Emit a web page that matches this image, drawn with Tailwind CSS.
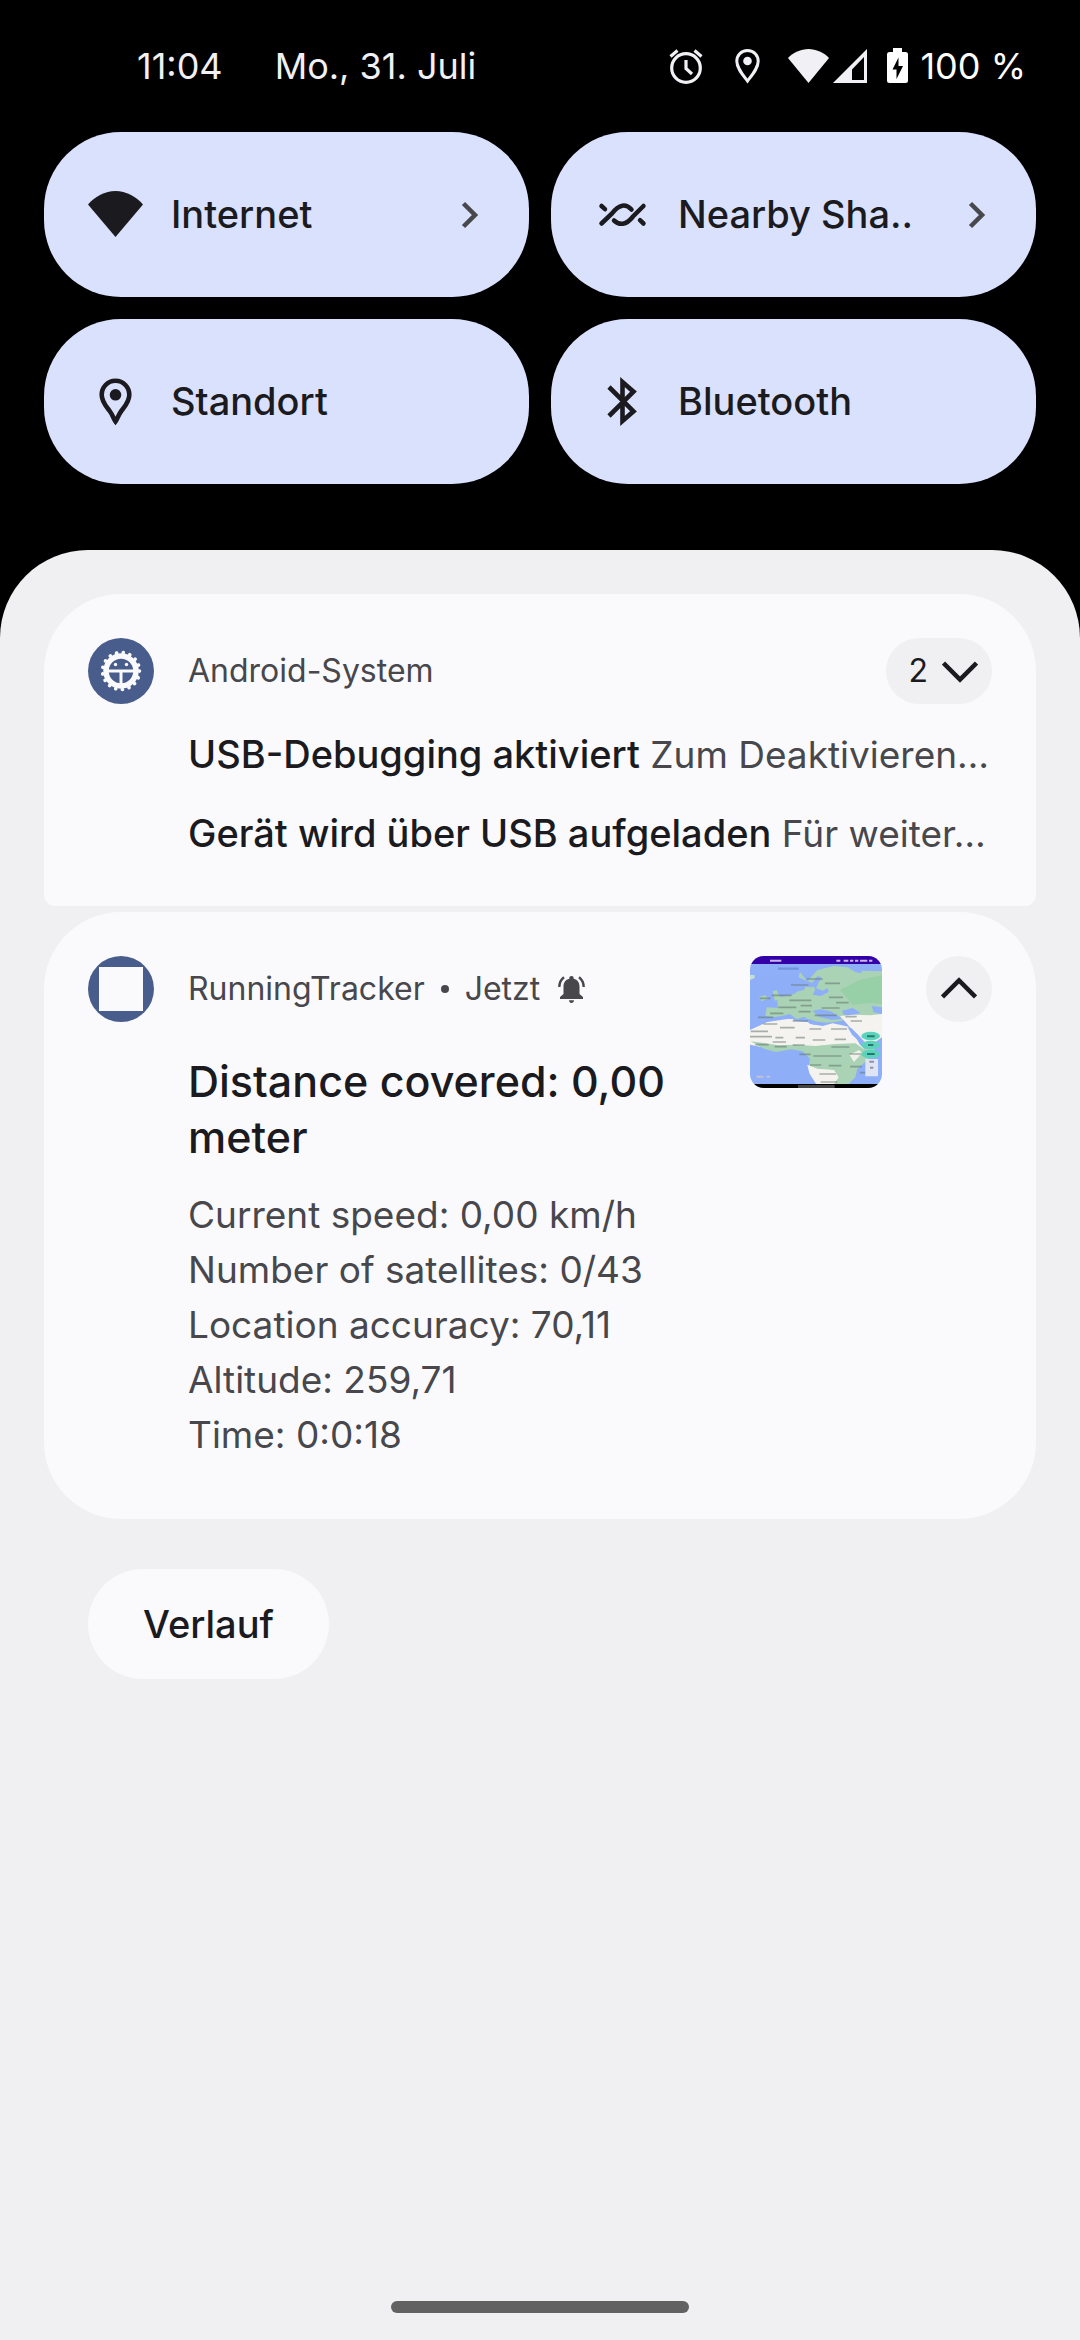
<!DOCTYPE html>
<html lang="de">
<head>
<meta charset="utf-8">
<meta name="viewport" content="width=device-width, initial-scale=1">
<title>Benachrichtigungen</title>
<script src="https://cdn.jsdelivr.net/npm/@tailwindcss/browser@4"></script>
</head>
<body class="bg-black font-['Inter',sans-serif] text-[#1b1b1f]">
<div class="flex min-h-screen flex-col">

  <!-- Status bar -->
  <header class="flex h-[132px] items-center justify-between pr-[54px] pl-[137px] text-4xl text-[#f1f0f4]">
    <div class="flex items-center gap-[52px]">
      <time>11:04</time>
      <span>Mo., 31. Juli</span>
    </div>
    <div class="flex items-center">
      <svg class="mr-[30px] h-9 w-9" viewBox="0 0 36 36" fill="none" stroke="currentColor" stroke-width="3.200"><circle cx="18" cy="20" r="14.300"/><path d="M18 12v8.500l6 5.500M2.500 8.500l7-6M33.500 8.500l-7-6"/></svg>
      <svg class="mr-[27px] h-9 w-[27px]" viewBox="0 0 27 36"><path d="M13.500 2.500C7 2.500 2.800 7.500 2.800 13.300c0 6.700 5.700 13.200 10.700 19.700 5-6.500 10.700-13 10.700-19.700 0-5.800-4.200-10.800-10.700-10.800z" fill="none" stroke="currentColor" stroke-width="3"/><circle cx="13.500" cy="13" r="4.300" fill="currentColor"/></svg>
      <svg class="mr-1 h-[34px] w-[41px]" viewBox="0 0 41 34"><path d="M0 9C5 3.500 13 0 20.500 0S36 3.500 41 9L20.500 34z" fill="currentColor"/></svg>
      <svg class="mr-5 h-[34px] w-[34px]" viewBox="0 0 34 34"><path fill-rule="evenodd" d="M34 0v34H0zM31 8L19 20.500V31h12z" fill="currentColor"/></svg>
      <svg class="mr-3 h-9 w-[21px] text-white" viewBox="0 0 21 36"><path fill-rule="evenodd" d="M6 0h9v4h3.500A2.500 2.500 0 0 1 21 6.500v26a2.500 2.500 0 0 1-2.500 2.500h-16A2.500 2.500 0 0 1 0 32.500v-26A2.500 2.500 0 0 1 2.500 4H6zM11.500 9.500L5.500 21.500h4V31l6.500-13h-4.500z" fill="currentColor"/></svg>
      <span class="text-white">100 %</span>
    </div>
  </header>

  <!-- Quick settings -->
  <section class="grid grid-cols-2 gap-[22px] px-11 pb-[66px] text-[38px] font-medium">
    <button class="flex h-[165px] items-center rounded-[77px] bg-[#dae1fd] pr-[50px] pl-11 text-left">
      <svg class="mr-7 h-[55px] w-[55px]" viewBox="0 0 55 55"><path d="M0 17.500C7 9.500 17 4 27.500 4S48 9.500 55 17.500L27.500 50z" fill="currentColor"/></svg>
      <span class="flex-1">Internet</span>
      <svg class="h-7 w-[18px] text-[#47474c]" viewBox="0 0 18 28" fill="none" stroke="currentColor" stroke-width="4.500"><path d="M2.500 2.500L14 14 2.500 25.500"/></svg>
    </button>
    <button class="flex h-[165px] items-center rounded-[77px] bg-[#dae1fd] pr-[50px] pl-11 text-left">
      <svg class="mr-7 h-[55px] w-[55px]" viewBox="0 0 55 55" fill="none" stroke="currentColor" stroke-width="4.500" stroke-linecap="round"><path d="M6.500 36.500L17 26.500C24 17 31 16.500 36.500 22.500M48.500 19L38 29.500C31 38.500 24.500 38.500 19 33.500"/><path d="M6.500 19l3.500 3.200M48.500 36.500l-3.500-3.300"/></svg>
      <span class="flex-1 whitespace-nowrap">Nearby Sha..</span>
      <svg class="h-7 w-[18px] text-[#47474c]" viewBox="0 0 18 28" fill="none" stroke="currentColor" stroke-width="4.500"><path d="M2.500 2.500L14 14 2.500 25.500"/></svg>
    </button>
    <button class="flex h-[165px] items-center rounded-[77px] bg-[#dae1fd] pr-[50px] pl-11 text-left">
      <svg class="mr-7 h-[55px] w-[55px]" viewBox="0 0 55 55"><path d="M27.500 6.800c-8 0-13.800 6.500-13.800 14 0 7.200 4.300 11.200 8 16.200 2.700 3.500 4.200 8.500 5.800 10.500 1.600-2 3.100-7 5.800-10.500 3.700-5 8-9 8-16.200 0-7.500-5.800-14-13.800-14z" fill="none" stroke="currentColor" stroke-width="4.600"/><circle cx="27.500" cy="20.800" r="5.800" fill="currentColor"/></svg>
      <span class="flex-1">Standort</span>
    </button>
    <button class="flex h-[165px] items-center rounded-[77px] bg-[#dae1fd] pr-[50px] pl-11 text-left">
      <svg class="mr-7 h-[55px] w-[55px]" viewBox="0 0 55 55" fill="none" stroke="currentColor" stroke-width="4.600"><path d="M14 13L38.500 37.300 27.500 47V8l11 9.700L14 42"/></svg>
      <span class="flex-1">Bluetooth</span>
    </button>
  </section>

  <!-- Notification shade -->
  <main class="flex flex-1 flex-col rounded-t-[88px] bg-[#f0f0f3] px-11 pt-11">
    <article class="flex gap-[34px] rounded-t-[77px] rounded-b-[11px] bg-[#fafafd] px-11 pt-11 pb-[33px]">
      <svg class="h-[66px] w-[66px] shrink-0" viewBox="0 0 66 66">
        <circle cx="33" cy="33" r="33" fill="#495d8c"/>
        <circle cx="33" cy="33" r="18.500" fill="none" stroke="#fafafd" stroke-width="3.600" stroke-linecap="round" stroke-dasharray="0.100 6.738"/>
        <circle cx="33" cy="33" r="15" fill="none" stroke="#fafafd" stroke-width="5.500"/>
        <path d="M20 33h26M33 33v13" stroke="#fafafd" stroke-width="3" fill="none"/>
        <circle cx="27.500" cy="26.500" r="1.700" fill="#fafafd"/><circle cx="38.500" cy="26.500" r="1.700" fill="#fafafd"/>
      </svg>
      <div class="min-w-0 flex-1">
        <div class="flex h-[66px] items-center justify-between">
          <h2 class="text-[32px] text-[#47474c]">Android-System</h2>
          <button class="flex h-[66px] items-center gap-3.5 rounded-full bg-[#f0f0f3] pr-3.5 pl-[22px] text-[32px]" aria-label="2 Benachrichtigungen maximieren">2
            <svg class="h-6 w-9" viewBox="0 0 36 24" fill="none" stroke="currentColor" stroke-width="4.500"><path d="M1.500 4L18 20.500 34.500 4"/></svg>
          </button>
        </div>
        <ul class="pt-[11px] text-[37px] leading-[79px] whitespace-nowrap text-[#47474c]">
          <li><span class="text-[38px] font-medium text-[#1b1b1f]">USB-Debugging aktiviert</span> Zum Deaktivieren…</li>
          <li><span class="text-[38px] font-medium text-[#1b1b1f]">Gerät wird über USB aufgeladen</span> Für weiter…</li>
        </ul>
      </div>
    </article>

    <article class="mt-1.5 flex items-start gap-[34px] rounded-[77px] bg-[#fafafd] px-11 pt-11 pb-[57px]">
      <svg class="h-[66px] w-[66px] shrink-0" viewBox="0 0 66 66"><circle cx="33" cy="33" r="33" fill="#495d8c"/><path d="M11 11h44v44H11z" fill="#fafafd"/></svg>
      <div class="min-w-0 flex-1">
        <div class="flex h-[66px] items-center text-[32px] text-[#47474c]">
          <h2>RunningTracker</h2>
          <span class="mx-4 h-2 w-2 rounded-full bg-[#47474c]"></span>
          <time>Jetzt</time>
          <svg class="ml-[18px] h-[27px] w-[27px]" viewBox="0 0 27 27"><path d="M13.500 0c1.300 0 2.200.9 2.200 2.200v.6c3.800.9 5.800 3.900 5.800 7.700V18l3.500 3v2H2v-2l3.500-3v-7.500c0-3.800 2-6.800 5.800-7.700v-.6C11.300.9 12.200 0 13.500 0zM11 24.300h5c0 1.600-1 2.600-2.500 2.600S11 25.900 11 24.300z" fill="currentColor"/><path d="M6 1.300C3 3.500 1.400 6.800 1.300 11M21 1.300c3 2.200 4.600 5.500 4.700 9.700" fill="none" stroke="currentColor" stroke-width="2.400"/></svg>
        </div>
        <h3 class="mt-[31px] text-[43px] leading-[56px] font-medium">Distance covered: 0,00 meter</h3>
        <p class="mt-[22px] text-[37px] leading-[55px] text-[#47474c]">Current speed: 0,00 km/h<br>Number of satellites: 0/43<br>Location accuracy: 70,11<br>Altitude: 259,71<br>Time: 0:0:18</p>
      </div>
      <div class="flex shrink-0 items-start gap-11">
        <svg class="h-[132px] w-[132px] rounded-[14px]" viewBox="60 48 396 396" role="img" aria-label="Karte">
          <path d="M60 48h396v396H60z" fill="#8fb0f8"/>
          <path d="M232 124l30-34 50-12 40 4 24 14 16 4 4-8 60 2v108l-30-4 4 18 22 6v14H350l-20 8-40 4-50-6-18-12-22 8-20-16-24 6-30 4-20-4 4-26 34 2-2-22 14-12 36-8 12-8 18-4 4-10 20 2 8-10-20-8-28-12 4-16z" fill="#a9d3b4"/>
          <path d="M330 150l60-30 66-14v86l-28-4-60 6z" fill="#98cfa7"/>
          <path d="M262 108l12 4-16 32 20 8 14-8 4 12-24 12-24-4 8-16-12-16z" fill="#8fb0f8"/>
          <path d="M128 154l12-4 6 14 12 12-24 6zM88 170l18-4 8 10-20 8z" fill="#a9d3b4"/>
          <path d="M60 104l14 2v8l-14 6z" fill="#c5dfd0"/>
          <path d="M248 212l24-4 30 6 20 12 14 10-30 4-40-10z" fill="#8fb0f8"/>
          <path d="M336 212l32-8 24 14-30 10-22-4z" fill="#8fb0f8"/>
          <path d="M330 228l40-4 50 2 36-4v70l-28 20-22-4-24-26-22-20z" fill="#f5f3ef"/>
          <path d="M112 246l60-9 54 1 14 14 38 6 30-8 48 10 20 30 14 24 14 14H230l-60-6-72 0-38-8v-44z" fill="#f5f3ef"/>
          <path d="M62 304l34 4 50 8 50-2 60 4 60-6 60-2 24 16 36-2-26 38-28 24-6 26-24 24-24 16h-44l-28-36-20-34 4-26-22-22-34-6-46 8-36-10z" fill="#a9d3b4"/>
          <path d="M232 374l30 12 50 4 14 22-16 24-18 8h-26l-28-44z" fill="#f5f3ef"/>
          <path d="M358 344l30-14 8 10-24 26z" fill="#f0f1ea"/>
          <path d="M352 260l14 6 32 36-8 4-24-22z" fill="#8fb0f8"/>
          <path d="M190 236l50 2 36 14-24 2-18-8-44-4z" fill="#8fb0f8"/>
          <path d="M183 135h52M230 117h48M285 130h45M90 175h32M125 166h60M178 181h66M145 202h54M212 197h34M275 204h54M297 172h42M318 188h38M120 220h40M84 232h46M206 215h36M254 226h66M346 230h34M188 243h46M100 252h42M150 263h44M238 267h36M303 267h48M362 243h34M62 274h52M60 290h66M136 293h24M197 293h28M248 300h38M314 298h34M76 314h40M128 306h40M134 320h36M188 315h36M304 321h54M208 343h34M250 348h84M358 342h36M240 375h34M296 377h38M360 380h36M268 402h50M272 426h50M390 398h40" stroke="#65756f" stroke-width="5" opacity=".55"/>
          <path d="M60 48h396v24H60z" fill="#3300a8"/>
          <path d="M120 62h34M319 62h12M341 62h14M360 62h10M375 62h10M390 62h22M417 62h10" stroke="#c7b8ef" stroke-width="6"/>
          <path d="M144 86h62" stroke="#6d94dd" stroke-width="7"/>
          <g fill="#5cd3bd"><ellipse cx="422" cy="288" rx="28" ry="13"/><ellipse cx="422" cy="315" rx="28" ry="13"/><ellipse cx="422" cy="342" rx="28" ry="13"/></g>
          <path d="M411 289h23M414 315h16M411 342h23" stroke="#26786c" stroke-width="6"/>
          <path d="M406 357h38v52h-38z" fill="#dfe5f5"/><path d="M418 365h14M420 383h10" stroke="#8c94a6" stroke-width="6"/>
          <path d="M80 410h20M110 410h10" stroke="#c8bfd0" stroke-width="6"/>
          <path d="M60 432h396v12H60z"/><path d="M204 435h110v9H204z" fill="#444"/>
        </svg>
        <button class="flex h-[66px] w-[66px] items-center justify-center rounded-full bg-[#f0f0f3]" aria-label="Minimieren">
          <svg class="h-6 w-9" viewBox="0 0 36 24" fill="none" stroke="currentColor" stroke-width="4.500"><path d="M1.500 20L18 3.500 34.500 20"/></svg>
        </button>
      </div>
    </article>

    <button class="mt-[50px] ml-11 h-[110px] self-start rounded-full bg-[#fafafd] px-[55px] text-[38px] font-medium">Verlauf</button>

    <div class="mt-auto mb-[27px] h-3 w-[298px] self-center rounded-full bg-[#626262]"></div>
  </main>
</div>
</body>
</html>
